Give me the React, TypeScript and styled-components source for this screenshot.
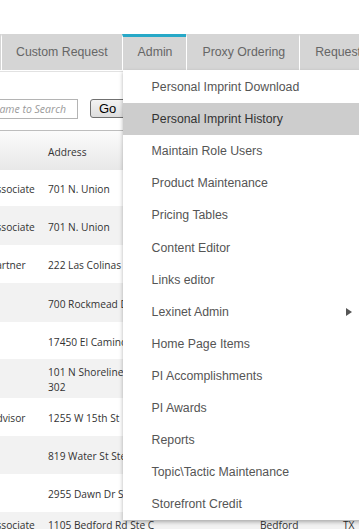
import styled, { createGlobalStyle } from "styled-components";

const GlobalStyle = createGlobalStyle`
  html, body {
    margin: 0;
    padding: 0;
    overflow: hidden;
    background: #ffffff;
  }
  body {
    font-family: "Liberation Sans", Arial, sans-serif;
  }
`;

const tabs = [
  { label: "Custom Request" },
  { label: "Admin", active: true },
  { label: "Proxy Ordering" },
  { label: "Request Status" },
];

const menuItems = [
  { label: "Personal Imprint Download" },
  { label: "Personal Imprint History", hover: true },
  { label: "Maintain Role Users" },
  { label: "Product Maintenance" },
  { label: "Pricing Tables" },
  { label: "Content Editor" },
  { label: "Links editor" },
  { label: "Lexinet Admin", sub: true },
  { label: "Home Page Items" },
  { label: "PI Accomplishments" },
  { label: "PI Awards" },
  { label: "Reports" },
  { label: "Topic\\Tactic Maintenance" },
  { label: "Storefront Credit" },
];

const rows = [
  { title: "Associate", address: "701 N. Union", city: "Richardson", state: "TX", h: 36 },
  { title: "Associate", address: "701 N. Union", city: "Richardson", state: "TX", h: 39 },
  { title: "Partner", address: "222 Las Colinas Blvd", city: "Irving", state: "TX", h: 38 },
  { title: "", address: "700 Rockmead Dr", city: "Kingwood", state: "TX", h: 39 },
  { title: "", address: "17450 El Camino Real", city: "Houston", state: "TX", h: 37 },
  { title: "", address: "101 N Shoreline Blvd Ste\n302", city: "Corpus Christi", state: "TX", h: 39 },
  { title: "Advisor", address: "1255 W 15th St", city: "Plano", state: "TX", h: 38 },
  { title: "", address: "819 Water St Ste 200", city: "Kerrville", state: "TX", h: 38 },
  { title: "", address: "2955 Dawn Dr Ste 104", city: "Georgetown", state: "TX", h: 38 },
  { title: "Associate", address: "1105 Bedford Rd Ste C", city: "Bedford", state: "TX", h: 24 },
];

export default function App() {
  return (
    <>
      <GlobalStyle />
      <Page>
        <TabBar>
          {tabs.map((t) => (
            <Tab key={t.label} $active={t.active}>
              {t.label}
              {t.active && (
                <Dropdown>
                  {menuItems.map((m) => (
                    <MenuItem key={m.label} $hover={m.hover}>
                      {m.label}
                      {m.sub && <SubArrow />}
                    </MenuItem>
                  ))}
                </Dropdown>
              )}
            </Tab>
          ))}
        </TabBar>
        <Divider />
        <Content>
          <SearchRow>
            <SearchInput placeholder="Name to Search" />
            <GoButton>Go</GoButton>
          </SearchRow>
          <Grid>
            <HeaderRow>
              <HeadCell></HeadCell>
              <HeadCell>Address</HeadCell>
              <HeadCell>City</HeadCell>
              <HeadCell>State</HeadCell>
            </HeaderRow>
            {rows.map((r, i) => (
              <Row key={i} $h={r.h} $alt={i % 2 === 1}>
                <Cell>{r.title}</Cell>
                <Cell>{r.address}</Cell>
                <Cell>{r.city}</Cell>
                <Cell>{r.state}</Cell>
              </Row>
            ))}
          </Grid>
        </Content>
      </Page>
    </>
  );
}

const Page = styled.div`
  width: 359px;
  height: 529px;
  padding-top: 34px;
  box-sizing: border-box;
`;

const TabBar = styled.div`
  display: flex;
  height: 36px;
  padding-left: 1px;
  background: #d5d5d5;
  white-space: nowrap;
`;

const Tab = styled.div<{ $active?: boolean }>`
  position: relative;
  display: flex;
  align-items: center;
  box-sizing: border-box;
  height: 36px;
  padding: 0 14px 3px 15px;
  border-left: 1px solid #ffffff;
  border-top: 3px solid ${(p) => (p.$active ? "#27a8c7" : "transparent")};
  background: #d5d5d5;
  font-size: 12.3px;
  color: #666666;
  flex-shrink: 0;

  &:first-child {
    padding-left: 14px;
  }
`;

const Dropdown = styled.div`
  position: absolute;
  top: 33px;
  left: 0;
  width: 240px;
  padding: 1px 0 0;
  background: #ffffff;
  box-shadow: 0 2px 4px rgba(0, 0, 0, 0.3);
  z-index: 10;
`;

const MenuItem = styled.div<{ $hover?: boolean }>`
  display: flex;
  align-items: center;
  height: 32.1px;
  padding: 0 11px 0 29px;
  font-size: 12.3px;
  color: ${(p) => (p.$hover ? "#333333" : "#555555")};
  background: ${(p) => (p.$hover ? "#cdcdcd" : "transparent")};
`;

const SubArrow = styled.span`
  margin-left: auto;
  width: 0;
  height: 0;
  border-left: 6px solid #555555;
  border-top: 4px solid transparent;
  border-bottom: 4px solid transparent;
`;

const Divider = styled.div`
  height: 1px;
  margin-top: 1px;
  background: #e2e2e2;
`;

/* the page is scrolled a little to the right, so the content starts left of the frame */
const Content = styled.div`
  margin-left: -18px;
  font-family: "Open Sans", "Liberation Sans", sans-serif;
`;

const SearchRow = styled.div`
  display: flex;
  align-items: flex-start;
  gap: 12px;
  padding: 27px 0 0 6px;
`;

const SearchInput = styled.input`
  box-sizing: border-box;
  width: 90px;
  height: 20px;
  padding: 0 3px;
  border: 1px solid #b4b4b4;
  outline: none;
  font-family: "Open Sans", sans-serif;
  font-size: 10.5px;

  &::placeholder {
    font-style: italic;
    color: #9a9a9a;
  }
`;

const GoButton = styled.button`
  box-sizing: border-box;
  width: 38px;
  height: 19px;
  padding: 0 0 0 8px;
  text-align: left;
  border: 1px solid #707070;
  border-radius: 3px;
  background: linear-gradient(#f3f3f3, #dddddd);
  font-family: "Liberation Sans", Arial, sans-serif;
  font-size: 13px;
  color: #000000;
  line-height: 17px;
`;

const Grid = styled.div`
  margin-top: 11px;
  border-top: 1px solid #bdbdbd;
`;

const columns = "58px 212px 83px 1fr";

const HeaderRow = styled.div`
  display: grid;
  grid-template-columns: ${columns};
  height: 39px;
  align-items: center;
  padding-top: 2px;
  box-sizing: border-box;
  background: linear-gradient(#fbfbfb, #e8e8e8);
`;

const HeadCell = styled.div`
  padding: 0 8px;
  font-size: 10.2px;
  color: #333333;
  white-space: nowrap;
`;

const Row = styled.div<{ $h: number; $alt?: boolean }>`
  display: grid;
  grid-template-columns: ${columns};
  height: ${(p) => p.$h}px;
  align-items: center;
  padding-top: 3px;
  box-sizing: border-box;
  background: ${(p) => (p.$alt ? "#f2f2f2" : "#ffffff")};
`;

const Cell = styled.div`
  padding: 0 8px;
  font-size: 10.2px;
  line-height: 15px;
  color: #333333;
  white-space: pre-line;
  overflow: hidden;
`;
